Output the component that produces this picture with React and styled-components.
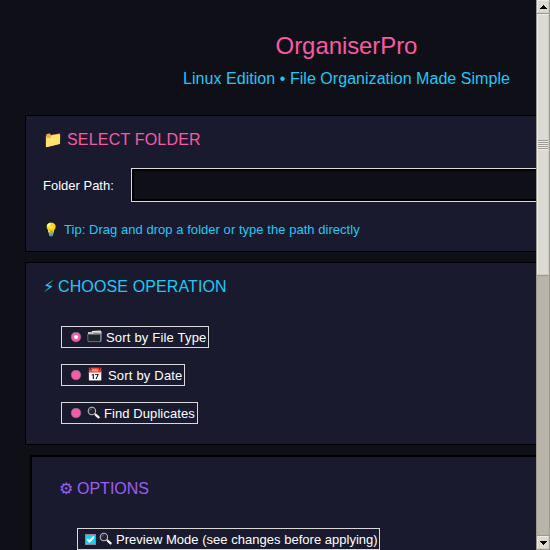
import React from "react";
import styled, { createGlobalStyle } from "styled-components";

const Global = createGlobalStyle`
  * { box-sizing: border-box; }
  html, body { margin: 0; width: 550px; height: 550px; overflow: hidden; background: #0f0f17; }
`;

const Window = styled.div`
  display: grid;
  grid-template-columns: 536px 14px;
  width: 550px;
  height: 550px;
  overflow: hidden;
  background: #0f0f17;
  color: #ffffff;
  font: 13px/16px "Liberation Sans", Arial, sans-serif;
  white-space: nowrap;
`;

const Content = styled.main`
  height: 550px;
  overflow: hidden;
  padding-left: 25px;
`;

const Header = styled.header`
  width: 643px;
  height: 115px;
  padding-top: 32px;
  text-align: center;
`;

const Title = styled.h1`
  margin: 0;
  font-size: 24px;
  font-weight: 400;
  line-height: 28px;
  letter-spacing: -0.08px;
  color: #f65ba2;
`;

const Subtitle = styled.p`
  margin: 10px 0 0;
  font-size: 16px;
  line-height: 18px;
  letter-spacing: 0.045px;
  color: #20c8f6;
`;

const Panel = styled.section`
  width: 643px;
  height: ${(p) => p.$height}px;
  margin: 0 0 ${(p) => p.$gap || 0}px ${(p) => p.$indent || 0}px;
  padding: ${(p) => p.$padding};
  border: ${(p) => p.$border || 1}px solid #000000;
  background: #1a1a2e;
`;

const Heading = styled.h2`
  display: flex;
  align-items: center;
  height: 18px;
  margin: 0;
  font-size: 16px;
  font-weight: 400;
  line-height: 18px;
  letter-spacing: ${(p) => p.$spacing || 0}px;
  color: ${(p) => p.$color};
`;

const Glyph = styled.span`
  flex: none;
  width: ${(p) => p.$width}px;
  font-size: ${(p) => p.$size || 13}px;
  letter-spacing: 0;
`;

const Field = styled.label`
  display: grid;
  grid-template-columns: 88px 1fr;
  align-items: center;
  height: 34px;
  margin-top: 19px;
`;

const FieldName = styled.span`
  padding-top: 2px;
`;

const Entry = styled.input`
  width: 480px;
  height: 34px;
  padding: 0 4px;
  border: 1px solid #d9d9d9;
  border-radius: 0;
  outline: 2px solid #000000;
  outline-offset: -3px;
  background: #0f0f17;
  color: #ffffff;
`;

const Tip = styled.p`
  display: flex;
  align-items: center;
  height: 16px;
  margin: 20px 0 0;
  letter-spacing: 0.04px;
  color: #20c8f6;
`;

const Options = styled.div`
  display: flex;
  flex-direction: column;
  align-items: flex-start;
  gap: 16px;
  margin: 30px 0 0 18px;
`;

const Choice = styled.label`
  display: flex;
  align-items: center;
  width: ${(p) => p.$width}px;
  height: 22px;
  padding-left: ${(p) => p.$pad}px;
  border: 1px solid #d9d9d9;
  letter-spacing: ${(p) => p.$spacing}px;
`;

const ChoiceText = styled.span`
  position: relative;
  top: 1px;
`;

const Mark = styled.svg`
  flex: none;
  display: block;
  width: 11px;
  height: 11px;
  margin-right: ${(p) => p.$gap}px;
`;

const Picture = styled.svg`
  display: block;
  width: 16px;
  height: 14px;
`;

const Track = styled.aside`
  display: flex;
  flex-direction: column;
  height: 550px;
  border: 1px solid #9e9a91;
  border-top: 0;
  background: #b8b4aa;
`;

const Arrow = styled.div`
  display: grid;
  place-items: center;
  flex: none;
  height: 13px;
  border: 1px solid;
  border-color: #eeebe7 #cfcdc8 #cfcdc8 #eeebe7;
  background: #dcdad5;
`;

const Thumb = styled.div`
  display: grid;
  place-items: center;
  height: 261px;
  border: 1px solid;
  border-color: #eeebe7 #cfcdc8 #cfcdc8 #eeebe7;
  background: #dcdad5;
`;

const Seam = styled.div`
  flex: none;
  height: 1px;
  background: #9e9a91;
`;

const Grip = styled.div`
  width: 10px;
  height: 10px;
  background: repeating-linear-gradient(#9e9a91 0 1px, #eeebe7 1px 2px);
`;

const Spring = styled.div`
  flex: 1;
`;

function Radio({ checked }) {
  return (
    <Mark $gap={5} viewBox="0 0 11 11">
      <circle cx="5" cy="5" r="4.8" fill="#f65ba6" stroke="#77748a" strokeWidth=".7" />
      {checked && <circle cx="5" cy="5" r="2" fill="#ffffff" />}
    </Mark>
  );
}

function Check() {
  return (
    <Mark $gap={3} viewBox="0 0 11 11">
      <rect x=".5" y=".5" width="10" height="10" fill="#20ccfb" stroke="#888894" />
      <path d="M2.3 5.2 4.4 7.6 8.8 2.8" fill="none" stroke="#ffffff" strokeWidth="2" />
    </Mark>
  );
}

function Lens() {
  return (
    <Picture viewBox="0 0 16 14">
      <circle cx="4.9" cy="5" r="3.7" fill="#22232f" stroke="#b9bcc2" strokeWidth="1.1" />
      <path d="M2.8 4.6Q3.2 3 4.8 2.8" fill="none" stroke="#6686a0" strokeWidth=".8" />
      <path d="M7.7 7.7 9 9" stroke="#b9bcc2" strokeWidth="1.2" />
      <path d="M8.8 8.8 11.6 11.4" stroke="#f4f4f4" strokeWidth="2.3" strokeLinecap="round" />
    </Picture>
  );
}

function Dividers() {
  return (
    <Picture viewBox="0 0 16 14">
      <path d="M1 4.3V2.2L5 1.8V1l8-.5 1.3.6V4.3z" fill="#e9e9e6" />
      <path d="M2 2.9 13.3 2" stroke="#8b8d8d" strokeWidth=".6" />
      <path d="M.7 4.4H13.5V11.6H1z" fill="#20242c" stroke="#6b6e73" strokeWidth="1" />
      <path d="M14.1 2V10.8L13.4 12" fill="none" stroke="#a6a8aa" strokeWidth=".8" />
      <path d="M1.2 4.4H6L7 3.7H13.5" fill="none" stroke="#595d62" strokeWidth=".8" />
    </Picture>
  );
}

const operations = [
  { icon: <Dividers />, glyph: 19, text: "Sort by File Type", width: 148, spacing: 0.19, checked: true },
  { icon: "📅", glyph: 21, text: "Sort by Date", width: 124, spacing: 0.19 },
  { icon: <Lens />, glyph: 17, text: "Find Duplicates", width: 137, spacing: 0.08 },
];

export default function App() {
  return (
    <>
      <Global />
      <Window>
        <Content>
          <Header>
            <Title>OrganiserPro</Title>
            <Subtitle>Linux Edition • File Organization Made Simple</Subtitle>
          </Header>
          <Panel $height={137} $gap={10} $padding="15px 17px">
            <Heading $color="#f65ba2" $spacing={0.19}><Glyph $width={24} $size={16}>📁</Glyph>SELECT FOLDER</Heading>
            <Field><FieldName>Folder Path:</FieldName><Entry type="text" /></Field>
            <Tip><Glyph $width={21}>💡</Glyph>Tip: Drag and drop a folder or type the path directly</Tip>
          </Panel>
          <Panel $height={183} $gap={10} $padding="15px 17px">
            <Heading $color="#20c8f6" $spacing={0.12}><Glyph $width={15} $size={16}>⚡︎</Glyph>CHOOSE OPERATION</Heading>
            <Options>
              {operations.map((o) => (
                <Choice key={o.text} $width={o.width} $pad={9} $spacing={o.spacing}>
                  <Radio checked={o.checked} />
                  <Glyph $width={o.glyph}>{o.icon}</Glyph>
                  <ChoiceText>{o.text}</ChoiceText>
                </Choice>
              ))}
            </Options>
          </Panel>
          <Panel $height={240} $indent={5} $border={2} $padding="23px 27px">
            <Heading $color="#9d5ef0"><Glyph $width={18} $size={16}>⚙︎</Glyph>OPTIONS</Heading>
            <Options>
              <Choice $width={303} $pad={7} $spacing={0.02}>
                <Check />
                <Glyph $width={17}><Lens /></Glyph>
                <ChoiceText>Preview Mode (see changes before applying)</ChoiceText>
              </Choice>
            </Options>
          </Panel>
        </Content>
        <Track>
          <Arrow>
            <svg width="7" height="4" shapeRendering="crispEdges"><path d="M3 0h1v1h1v1h1v1h1v1H0V3h1V2h1V1h1z" /></svg>
          </Arrow>
          <Seam />
          <Thumb><Grip /></Thumb>
          <Seam />
          <Spring />
          <Seam />
          <Arrow>
            <svg width="7" height="4" shapeRendering="crispEdges"><path d="M0 0h7v1H6v1H5v1H4v1H3V3H2V2H1V1H0z" /></svg>
          </Arrow>
        </Track>
      </Window>
    </>
  );
}
